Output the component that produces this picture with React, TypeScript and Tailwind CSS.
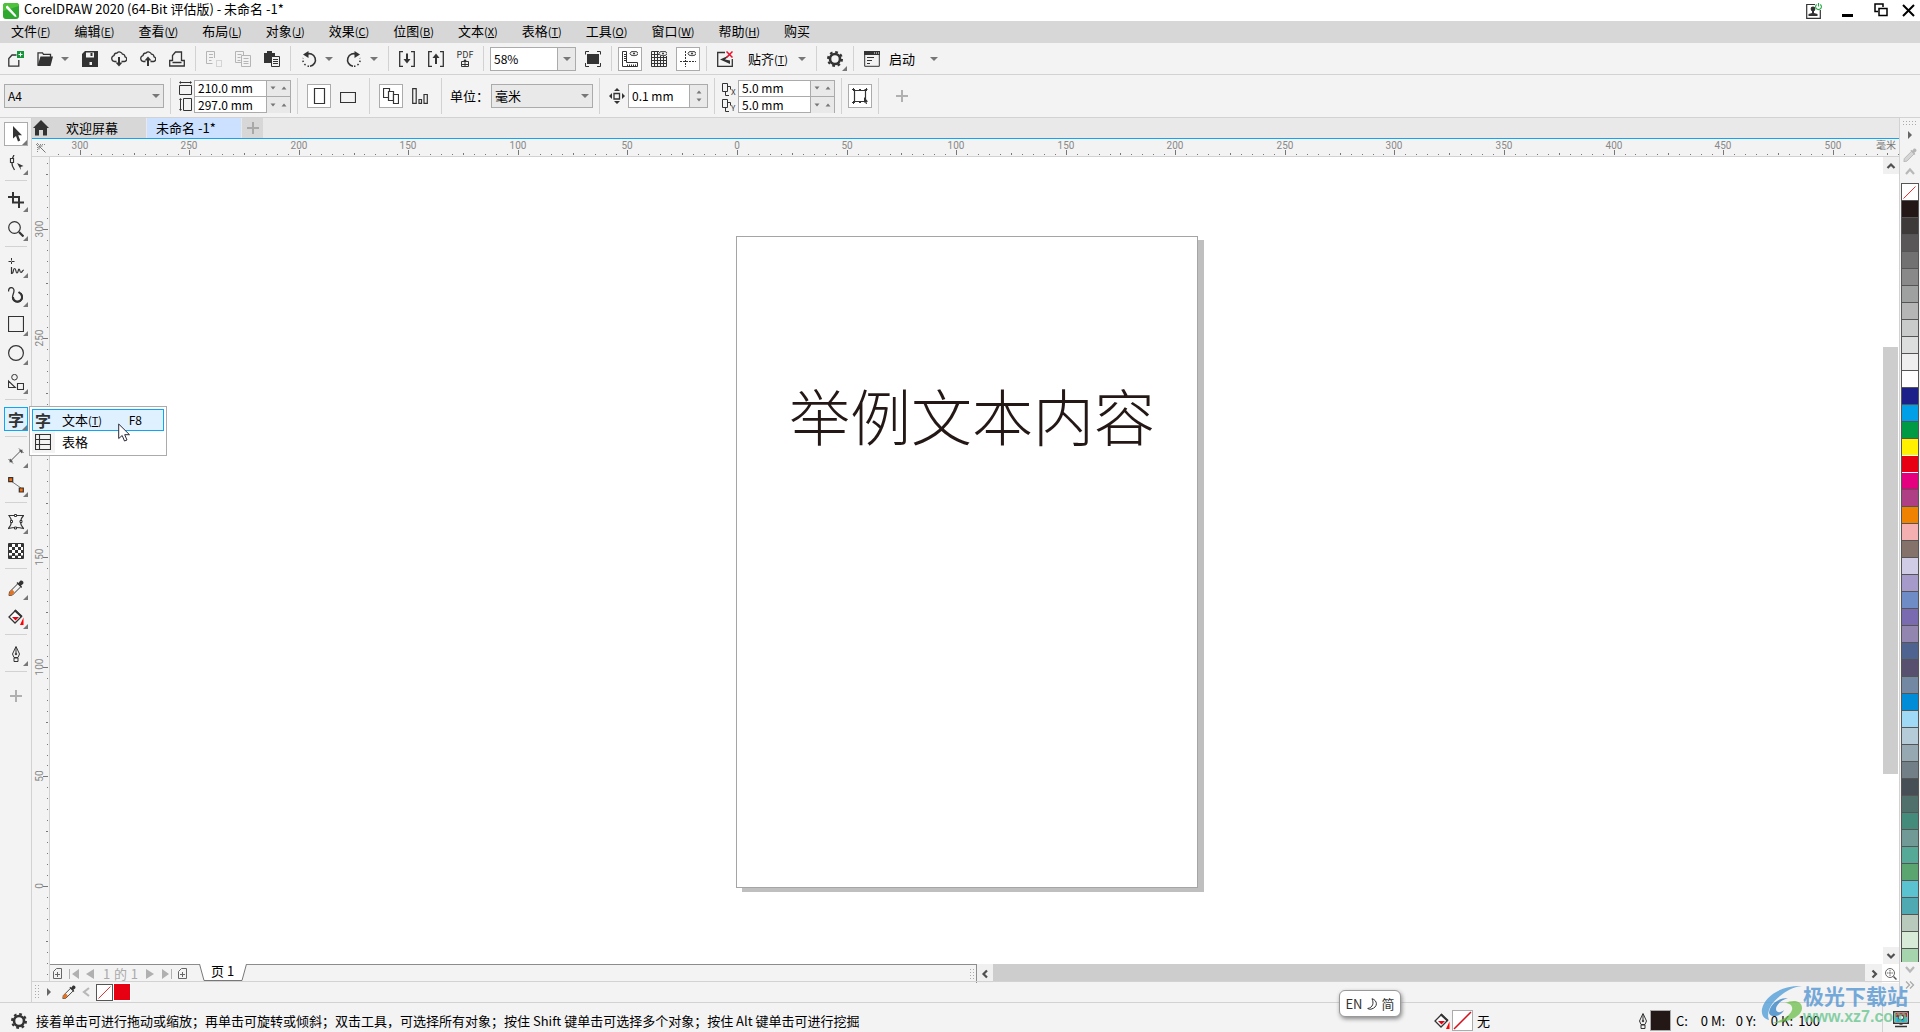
import React from "react";

const PX_PER_MM = 2.1914;
const ORIGIN_X = 687;
const ORIGIN_Y = 729;

const menus = [
  { label: "文件", key: "F" },
  { label: "编辑", key: "E" },
  { label: "查看", key: "V" },
  { label: "布局", key: "L" },
  { label: "对象", key: "J" },
  { label: "效果", key: "C" },
  { label: "位图", key: "B" },
  { label: "文本", key: "X" },
  { label: "表格", key: "T" },
  { label: "工具", key: "O" },
  { label: "窗口", key: "W" },
  { label: "帮助", key: "H" },
  { label: "购买", key: "" },
];

const swatches = [
  "#231815", "#3e3a39", "#595757", "#727171", "#898989", "#9fa0a0", "#b5b5b6", "#c9caca",
  "#dcdddd", "#efefef", "#ffffff", "#1d2088", "#00a0e9", "#009944", "#fff100", "#e60012",
  "#e4007f", "#ae3f85", "#ef8200", "#f4b0b1", "#85736b", "#d0cce5", "#a59aca", "#6f8cc7",
  "#7a6bb1", "#9285b0", "#4e638f", "#58506f", "#7288a3", "#008cd7", "#9fd9f6", "#b5ccd8",
  "#96a9b2", "#727f87", "#464f55", "#50706b", "#458b7b", "#719995", "#56a897", "#5ba570",
  "#5bc2cf", "#4ea9b3", "#b7cabc", "#d8ebd9", "#a5d4ad",
];

type IconProps = {
  w?: number;
  h?: number;
  className?: string;
  children: React.ReactNode;
};

const Icon = ({ w = 16, h = 16, className = "", children }: IconProps) => (
  <svg
    width={w}
    height={h}
    viewBox={`0 0 ${w} ${h}`}
    fill="none"
    stroke="#333"
    className={`shrink-0 ${className}`}
    aria-hidden="true"
  >
    {children}
  </svg>
);

const Caret = ({ up = false, small = false }: { up?: boolean; small?: boolean }) => (
  <Icon w={8} h={4}>
    {small ? (
      <path d={up ? "M1.5 3.5 4 .5l2.5 3z" : "M1.5.5h5L4 3.5z"} fill="#777" stroke="none" />
    ) : (
      <path d={up ? "M0 4 4 0l4 4z" : "M0 0h8L4 4z"} fill="#777" stroke="none" />
    )}
  </Icon>
);

const Corner = () => (
  <svg width="5" height="5" viewBox="0 0 5 5" className="absolute right-0 bottom-0" aria-hidden="true">
    <path d="M5 0v5H0z" fill="#777" />
  </svg>
);

const Sep = () => (
  <div className="flex w-[3px] shrink-0 justify-center self-stretch py-[3px]">
    <div className="w-px bg-[#d2d2d2]" />
  </div>
);

type ToolButtonProps = {
  label: string;
  active?: boolean;
  corner?: boolean;
  children: React.ReactNode;
};

const ToolButton = ({ label, active, corner, children }: ToolButtonProps) => (
  <button
    aria-label={label}
    className={`relative flex size-6 shrink-0 items-center justify-center ${
      active ? "border border-[#ababab] bg-white" : ""
    }`}
  >
    {children}
    {corner && <Corner />}
  </button>
);

const DropButton = ({ label }: { label: string }) => (
  <button aria-label={label} className="flex h-6 w-4 shrink-0 items-center justify-center">
    <Caret />
  </button>
);

const Eye = () => (
  <g>
    <ellipse cx="12" cy="2.5" rx="4" ry="2.2" fill="#f3f3f3" strokeWidth="0.9" />
    <circle cx="12" cy="2.5" r="1" fill="#333" stroke="none" />
  </g>
);

const Gear = () => (
  <Icon>
    <circle cx="8" cy="8" r="5" strokeWidth="2.6" />
    <circle cx="8" cy="8" r="7" strokeWidth="2" strokeDasharray="2.75 2.75" />
  </Icon>
);

const Dropper = ({ muted = false, w = 14 }: { muted?: boolean; w?: number }) => (
  <svg width={w} height={w} viewBox="0 0 16 16" fill="none" stroke={muted ? "#b5b5b5" : "#333"} aria-hidden="true">
    <path d="m10 3.5 3 3-8.500 8.500-3.500.5.5-3.500z" fill={muted ? "#d5d5d5" : "#f3f3f3"} />
    {!muted && <path d="m4 9.500 2.500 2.500-2.500 3-3 .5.5-3z" fill="#e8711c" stroke="none" />}
    <path d="m8.500 3 5 5 .5-1-1-1.500 2-1.500c1.500-2-1-4.500-3-3L10.500 3 9.500 2z" fill={muted ? "#b5b5b5" : "#333"} stroke="none" />
  </svg>
);

const Bucket = () => (
  <Icon>
    <path d="m7.500 1.500 6 6-6.500 6.500L1 8z" strokeWidth="1.3" fill="#fff" />
    <path d="m7.500.5 7 6.500-1.500 1.500-7-6.500z" fill="#333" stroke="none" />
    <path d="M4 8h7l-3.500 3.500z" fill="#e60012" stroke="none" />
    <path d="M15.500 8.500V16H12z" fill="#f00" stroke="none" />
  </Icon>
);

const Nib = () => (
  <Icon w={8}>
    <path d="M4 .5 7.500 8 6 11.500H2L.5 8zM2 12h4v3.500H2zM4 1v6" />
    <circle cx="4" cy="8" r="0.8" fill="#333" />
  </Icon>
);

const Chevron = ({ d, muted = false }: { d: string; muted?: boolean }) => (
  <Icon w={10} h={10}>
    <path d={d} stroke={muted ? "#b8b8b8" : "#505050"} strokeWidth="2.2" />
  </Icon>
);

const TitleBar = () => (
  <header className="flex h-[21px] shrink-0 items-center bg-white pr-[5px] pl-[3px]">
    <svg width="16" height="16" viewBox="0 0 16 16" aria-hidden="true">
      <rect width="16" height="16" rx="3" fill="#2fa82f" />
      <path d="M3 0h10a3 3 0 0 1 3 3L0 8V3a3 3 0 0 1 3-3z" fill="#4dc23a" />
      <path d="m3 3.500 1.500-1 8.500 9.500.5 2-2-.5L3 5z" fill="#fff" />
    </svg>
    <h1 className="ml-[5px] self-start text-[13px] leading-[18px]">CorelDRAW 2020 (64-Bit 评估版) - 未命名 -1*</h1>
    <div className="ml-auto flex items-center gap-5">
      <button aria-label="帐户">
        <Icon>
          <path d="M9 1.500H.7v13.800h13.600V7" strokeWidth="1.2" />
          <circle cx="7" cy="6" r="2.4" fill="#333" stroke="none" />
          <path d="M6 8h2v2l3.500 1v2h-9v-2L6 10z" fill="#333" stroke="none" />
          <path d="M10.700 1.500a2.900 2.900 0 1 0 3.600 0M12.500 0v3.500" stroke="#22a845" strokeWidth="1.1" />
        </Icon>
      </button>
      <button aria-label="最小化">
        <Icon w={12}>
          <path d="M0 12.500h11" stroke="#000" strokeWidth="3" />
        </Icon>
      </button>
      <button aria-label="还原">
        <Icon w={14}>
          <path d="M4 8.500H1V1h8v3M5 5.500h8v7H5z" stroke="#000" strokeWidth="1.5" />
        </Icon>
      </button>
      <button aria-label="关闭" className="-ml-[6px]">
        <Icon w={13}>
          <path d="m1 2 11 11M12 2 1 13" stroke="#000" strokeWidth="2" />
        </Icon>
      </button>
    </div>
  </header>
);

const MenuBar = () => (
  <nav className="flex h-[22px] shrink-0 items-start gap-6 bg-[#d7d7d7] pl-[11px] text-[13px]">
    {menus.map((menu) => (
      <button key={menu.label} className="flex items-center leading-5">
        {menu.label}
        {menu.key && (
          <span className="text-[11px]">
            (<u className="underline-offset-1">{menu.key}</u>)
          </span>
        )}
      </button>
    ))}
  </nav>
);

const Cloud = ({ down }: { down: boolean }) => (
  <Icon>
    <path
      d="M5.500 10.500h-2a3 3 0 0 1-.5-5.900 3 3 0 0 1 3-2.600 3.300 3.300 0 0 1 5.500 1.200 2.800 2.800 0 0 1 2.500 2.600 2.400 2.400 0 0 1-.5 4.700h-3"
      strokeWidth="1.3"
    />
    <path d={down ? "M8 6v6" : "M8 9v6"} strokeWidth="2" />
    <path d={down ? "M4.500 11.500h7L8 15.500z" : "M4.500 9.500h7L8 5.500z"} fill="#333" stroke="none" />
  </Icon>
);

const StandardBar = () => (
  <div className="flex h-8 shrink-0 items-center gap-[5px] border-b border-[#d2d2d2] pl-1">
    <ToolButton label="新建">
      <Icon>
        <path d="M8.500 4H4L.8 7.500v7.700h10V9" strokeWidth="1.3" />
        <path d="M9 0h7v7H9z" fill="#13963a" stroke="none" />
        <path d="M12.500 1.500v4M10.500 3.500h4" stroke="#fff" />
      </Icon>
    </ToolButton>
    <div className="flex">
      <ToolButton label="打开">
        <Icon>
          <path d="M1 14.500V1.800h4.500l1 1.500h7V6" strokeWidth="1.3" />
          <path d="M3.500 5.500H16L13.500 15H.5z" fill="#333" stroke="none" />
        </Icon>
      </ToolButton>
      <DropButton label="最近打开的文件" />
    </div>
    <ToolButton label="保存">
      <Icon>
        <path d="M3 0h13v16H0V3z" fill="#333" stroke="none" />
        <path d="M4 1.500h8v5H4z" fill="#f3f3f3" stroke="none" />
        <path d="M9.500 2v3" strokeWidth="2" />
        <path d="M7.500 11h2.500v3H7.500z" fill="#f3f3f3" stroke="none" />
      </Icon>
    </ToolButton>
    <ToolButton label="从云端打开">
      <Cloud down />
    </ToolButton>
    <ToolButton label="保存到云端">
      <Cloud down={false} />
    </ToolButton>
    <ToolButton label="打印">
      <Icon>
        <path d="M3.500 10V4.500l3-3.500h6v9" strokeWidth="1.3" />
        <path d="M3.500 9.500H.7V15h14.600V9.500h-2.800M3.500 11.500h9" strokeWidth="1.3" />
      </Icon>
    </ToolButton>
    <Sep />
    <ToolButton label="剪切">
      <Icon>
        <path d="M6.500 12.500h-6v-12h8V7M3 3.500h4M3 6.500h4M3 9.500h2.500" stroke="#b5b5b5" />
        <path d="M10.500 9.500h5v6h-5z" stroke="#b5b5b5" strokeDasharray="1 1" />
      </Icon>
    </ToolButton>
    <ToolButton label="复制">
      <Icon>
        <path d="M6 11.500H.5V.5h8V4M2.500 3.500h4M2.500 6.500h3M2.500 9.500h3M6.500 4.500h9v11h-9zM8.500 7.500h5M8.500 10.500h5M8.500 12.500h5" stroke="#b5b5b5" />
      </Icon>
    </ToolButton>
    <ToolButton label="粘贴">
      <Icon>
        <path d="M0 2h3V0h5v2h3v10H0z" fill="#333" stroke="none" />
        <path d="M7.500 5.500h8v10h-8z" fill="#f3f3f3" />
        <path d="M9 8.500h5M9 10.500h5M9 12.500h5" />
      </Icon>
    </ToolButton>
    <Sep />
    <div className="flex">
      <ToolButton label="撤销">
        <Icon>
          <path d="M5 3.500a6.300 6.300 0 1 1 4 11.700" strokeWidth="1.6" />
          <path d="M8 15.200A6.300 6.300 0 0 1 2.200 7" strokeWidth="1.6" strokeDasharray="1.5 2.2" />
          <path d="M7.500 0v7L2 3.500z" fill="#333" stroke="none" />
        </Icon>
      </ToolButton>
      <DropButton label="撤销列表" />
    </div>
    <div className="flex">
      <ToolButton label="重做">
        <Icon>
          <path d="M11 3.500a6.300 6.300 0 1 0-4 11.700" strokeWidth="1.6" />
          <path d="M8 15.200A6.300 6.300 0 0 0 13.800 7" strokeWidth="1.6" strokeDasharray="1.5 2.2" />
          <path d="M8.500 0v7L14 3.500z" fill="#333" stroke="none" />
        </Icon>
      </ToolButton>
      <DropButton label="重做列表" />
    </div>
    <Sep />
    <ToolButton label="导入">
      <Icon>
        <path d="M4 .7H.7v14.600H4M12 .7h3.300v14.600H12" strokeWidth="1.3" />
        <path d="M8 2.500V9" strokeWidth="2" />
        <path d="M4.500 8h7L8 12.500z" fill="#333" stroke="none" />
      </Icon>
    </ToolButton>
    <ToolButton label="导出">
      <Icon>
        <path d="M4 .7H.7v14.600H4M12 .7h3.300v14.600H12" strokeWidth="1.3" />
        <path d="M8 6v7" strokeWidth="2" />
        <path d="M4.500 7h7L8 2.500z" fill="#333" stroke="none" />
      </Icon>
    </ToolButton>
    <button aria-label="发布为 PDF" className="flex size-6 shrink-0 flex-col items-center justify-center text-[9px] leading-2 text-[#333]">
      PDF
      <Icon w={8} h={8}>
        <path d="M2.500 2.500h-2v5h7v-5h-2M.5 5.500h7M4 1v6" />
        <path d="M1.500 3h5L4 0z" fill="#333" stroke="none" />
      </Icon>
    </button>
    <Sep />
    <div className="flex h-6 w-[86px] border border-[#ababab] bg-white">
      <input aria-label="缩放级别" defaultValue="58%" className="w-full min-w-0 flex-1 pl-[3px] text-xs outline-none" />
      <button aria-label="缩放列表" className="flex w-[18px] items-center justify-center border-l border-[#ababab] bg-[#e9e9e9]">
        <Caret />
      </button>
    </div>
    <ToolButton label="全屏预览">
      <Icon>
        <path d="M.5 3.500V.5H4M12 .5h3.500v3M.5 12v3.500H4M12 15.500h3.500V12" />
        <path d="M2 3h12v10H2z" fill="#333" stroke="none" />
      </Icon>
    </ToolButton>
    <Sep />
    <ToolButton label="显示标尺" active>
      <Icon>
        <path d="M.5.5h4v11h11v4H.5zM2 3.500h2M2 5.500h2M2 7.500h2M2 9.500h2M5.500 13.500v2M7.500 13.500v2M9.500 13.500v2M11.500 13.500v2M13.500 13.500v2" />
        <Eye />
      </Icon>
    </ToolButton>
    <ToolButton label="显示网格">
      <Icon>
        <path d="M.5.5h15v15H.5zM3.500 0v16M6.500 0v16M9.500 0v16M12.500 0v16M0 3.500h16M0 6.500h16M0 9.500h16M0 12.500h16" />
        <path d="M8 0h8v5H8z" fill="#f3f3f3" stroke="none" />
        <Eye />
      </Icon>
    </ToolButton>
    <ToolButton label="显示辅助线" active>
      <Icon>
        <path d="M5.500 0v16M0 10.500h16" strokeDasharray="2 1" />
        <Eye />
      </Icon>
    </ToolButton>
    <Sep />
    <ToolButton label="贴齐关闭">
      <Icon>
        <path d="M8 1.500H.7v14h14.600V8" strokeWidth="1.3" />
        <path d="M13 4 3 8.500l10 4.500V9.500L8 8.500z" fill="#333" stroke="none" />
        <path d="m9.500.5 6 6M15.500.5l-6 6" stroke="#e8112d" strokeWidth="1.5" />
      </Icon>
    </ToolButton>
    <button className="flex w-[68px] shrink-0 items-center pl-[6px] text-[13px] leading-5">
      贴齐
      <span className="text-[11px]">
        (<u className="underline-offset-1">T</u>)
      </span>
      <span className="ml-auto flex w-4 justify-center">
        <Caret />
      </span>
    </button>
    <Sep />
    <ToolButton label="选项" corner>
      <Gear />
    </ToolButton>
    <Sep />
    <ToolButton label="应用程序启动器">
      <Icon>
        <path d="M.7.7h14.600v14.600H.7zM3 6.500h7M3 9.500h5M3 12.500h3" />
        <path d="M0 0h16v4H0z" fill="#333" stroke="none" />
        <path d="M10 2h1M12 2h1M14 2h1" stroke="#fff" />
      </Icon>
    </ToolButton>
    <button className="flex w-[53px] shrink-0 items-center justify-between text-[13px] leading-5">
      启动
      <span className="flex w-4 justify-center">
        <Caret />
      </span>
    </button>
  </div>
);

type PairProps = { first: string; second: string; labels: [string, string] };

const NumberPair = ({ first, second, labels }: PairProps) => (
  <div className="h-[33px] w-[97px] divide-y divide-[#ababab] border border-[#ababab] bg-white">
    {[first, second].map((value, i) => (
      <div key={labels[i]} className="flex h-4 overflow-hidden">
        <input aria-label={labels[i]} defaultValue={value} className="min-w-0 flex-1 pl-[3px] text-xs leading-4 outline-none" />
        <div className="flex w-6 items-center justify-evenly border-l border-[#ababab] bg-[#e9e9e9]">
          <button aria-label={`${labels[i]}减少`}>
            <Caret small />
          </button>
          <button aria-label={`${labels[i]}增加`}>
            <Caret small up />
          </button>
        </div>
      </div>
    ))}
  </div>
);

const Duplicate = ({ axis }: { axis: string }) => (
  <div className="flex h-4 w-[14px] items-end">
    <Icon w={9} h={13}>
      <path d="M.5.5h5v8h-5zM8.500 3.500v3M6 3.500h2.500M3.500 9v3.500H7" />
    </Icon>
    <span className="text-[8px] leading-2 text-[#333]">{axis}</span>
  </div>
);

const PropertyBar = () => (
  <div className="flex h-[43px] shrink-0 items-center gap-[5px] border-b border-[#d2d2d2] pl-1">
    <div className="relative">
      <select aria-label="页面大小" className="block h-6 w-40 appearance-none border border-[#ababab] bg-[#e9e9e9] pl-[3px] text-xs outline-none">
        <option>A4</option>
      </select>
      <span className="pointer-events-none absolute top-[10px] right-1">
        <Caret />
      </span>
    </div>
    <Sep />
    <div className="flex items-center gap-[2px] pl-[2px]">
      <div className="flex flex-col gap-[3px]">
        <Icon w={13} h={14}>
          <path d="M.5 4.500h12v9H.5zM1 1.500h11" />
          <path d="M0 1.500 2 0v3zM13 1.500 11 0v3z" fill="#333" stroke="none" />
        </Icon>
        <Icon w={13} h={13}>
          <path d="M4.500.5h8v12h-8zM1.500 1v11" />
          <path d="M1.500 0 3 2H0zM1.500 13 3 11H0z" fill="#333" stroke="none" />
        </Icon>
      </div>
      <NumberPair first="210.0 mm" second="297.0 mm" labels={["页面宽度", "页面高度"]} />
    </div>
    <Sep />
    <div className="flex gap-[5px] px-[3px]">
      <ToolButton label="纵向" active>
        <Icon>
          <path d="M3.500.5h10v15h-10z" strokeWidth="1.2" />
        </Icon>
      </ToolButton>
      <ToolButton label="横向">
        <Icon>
          <path d="M.5 4.500h15v10H.5z" strokeWidth="1.2" />
        </Icon>
      </ToolButton>
    </div>
    <Sep />
    <div className="flex gap-[5px] px-[3px]">
      <ToolButton label="所有页面" active>
        <Icon>
          <path d="M.5.5h6v9h-6z" strokeWidth="1.2" />
          <path d="M5.500 3.500h5v9h-5z" fill="#fff" strokeWidth="1.2" />
          <path d="M10.500 6.500h5v9h-5z" fill="#fff" strokeWidth="1.2" />
        </Icon>
      </ToolButton>
      <ToolButton label="当前页面">
        <Icon>
          <path d="M.7.7h3.500v14.600H.7zM7 11.500h2.500v3.800H7zM12 6.500h3.300v8.800H12z" strokeWidth="1.2" />
        </Icon>
      </ToolButton>
    </div>
    <Sep />
    <div className="flex items-center pl-[2px] text-[13px]">
      <label htmlFor="unit" className="w-[41px] leading-5">
        单位：
      </label>
      <div className="relative">
        <select id="unit" defaultValue="毫米" className="block h-6 w-[102px] appearance-none border border-[#ababab] bg-[#e9e9e9] pl-[3px] outline-none">
          <option>毫米</option>
        </select>
        <span className="pointer-events-none absolute top-[10px] right-1">
          <Caret />
        </span>
      </div>
    </div>
    <Sep />
    <div className="flex items-center gap-[3px] pl-[3px]">
      <Icon>
        <path d="M5 5.500h5.500V11H5z" strokeWidth="1.3" />
        <path d="m8 0 3 3H5zM8 16l-3-3h6zM0 8l3-3v6zM16 8l-3 3V5z" fill="#333" stroke="none" />
      </Icon>
      <div className="flex h-6 w-20 border border-[#ababab] bg-white">
        <input aria-label="微调距离" defaultValue="0.1 mm" className="min-w-0 flex-1 pl-[3px] text-xs outline-none" />
        <div className="flex w-[18px] flex-col items-center justify-evenly border-l border-[#ababab] bg-[#e9e9e9]">
          <button aria-label="微调增加">
            <Caret small up />
          </button>
          <button aria-label="微调减少">
            <Caret small />
          </button>
        </div>
      </div>
    </div>
    <Sep />
    <div className="flex items-center gap-[2px] pl-px">
      <div className="flex flex-col">
        <Duplicate axis="X" />
        <Duplicate axis="Y" />
      </div>
      <NumberPair first="5.0 mm" second="5.0 mm" labels={["再制水平距离", "再制垂直距离"]} />
    </div>
    <Sep />
    <ToolButton label="将所有对象视为已填充" active>
      <Icon>
        <path d="M2.500 2.500h11v11h-11z" strokeWidth="1.2" />
        <path d="M0 1.500h3M1.500 0v3M12.500 1.500h3M14.500 0v3M0 14.500h3M1.500 13v3M7 1.500h2M7 14.500h2" />
        <path d="m12 9 4 4.500-1.500.5.5 2h-1l-1-2-1 1z" fill="#333" stroke="none" />
      </Icon>
    </ToolButton>
    <Sep />
    <button aria-label="自定义" className="flex h-6 w-8 items-center justify-center pl-[2px]">
      <Icon w={12} h={12}>
        <path d="M6 0v12M0 6h12" stroke="#b0b0b0" strokeWidth="2" />
      </Icon>
    </button>
  </div>
);

const ToolSlot = ({ label, active, corner = true, children }: ToolButtonProps) => (
  <div className="flex h-[29px] shrink-0 items-center pl-1">
    <ToolButton label={label} active={active} corner={corner}>
      {children}
    </ToolButton>
  </div>
);

const ToolSep = () => <div className="mt-[3px] mb-1 ml-[5px] h-px w-[22px] shrink-0 bg-[#d2d2d2]" />;

const TextGlyph = () => <span className="text-base leading-4 font-bold text-[#333]">字</span>;

const TextFlyout = () => (
  <div role="menu" className="absolute top-[2px] left-[29px] z-20 h-[50px] w-[138px] border border-[#ababab] bg-white p-[2px]">
    <button role="menuitem" className="flex h-[22px] w-[132px] items-center border border-[#0ea5f5] bg-[#dff0ff] pl-[2px] text-[13px]">
      <TextGlyph />
      <span className="ml-[11px] flex items-center leading-5">
        文本
        <span className="text-[11px]">
          (<u className="underline-offset-1">T</u>)
        </span>
      </span>
      <span className="ml-auto pr-[21px] text-xs">F8</span>
    </button>
    <button role="menuitem" className="flex h-[22px] w-[132px] items-center text-[13px] leading-5">
      <span className="flex h-[22px] w-[23px] items-center bg-[#f3f3f3] pl-[3px]">
        <Icon>
          <path d="M.5.5h15v15H.5zM4.500 0v16M0 5.500h16M0 10.500h16" strokeWidth="1.1" />
        </Icon>
      </span>
      <span className="ml-[7px]">表格</span>
    </button>
    <svg width="13" height="20" viewBox="0 0 13 20" className="absolute top-4 left-[88px]" aria-hidden="true">
      <path d="M.7 1v14.500l3.500-3 2.300 5.500 2.500-1-2.300-5.300h4.800z" fill="#fff" stroke="#2a2a3a" />
    </svg>
  </div>
);

const Toolbox = () => (
  <aside className="flex w-8 shrink-0 flex-col border-r border-[#d2d2d2] pt-px">
    <ToolSlot label="选择" active>
      <Icon>
        <path d="M5 0v12.500l3-2.500 2 5.500 2.200-1-2-5.200H14z" fill="#333" stroke="none" />
      </Icon>
    </ToolSlot>
    <ToolSlot label="形状">
      <Icon>
        <path d="M6 0C3 5 3 10 6.500 15" strokeWidth="1.3" />
        <path d="M2.500 3.500h3v4h-3z" fill="#fff" strokeWidth="1.2" />
        <path d="m9 8 6.500 3-3 1 .5 3z" fill="#333" stroke="none" />
      </Icon>
    </ToolSlot>
    <ToolSep />
    <ToolSlot label="裁剪">
      <Icon>
        <path d="M5 0v10.500h11M0 5h11v11" strokeWidth="2" />
      </Icon>
    </ToolSlot>
    <ToolSlot label="缩放">
      <Icon>
        <circle cx="6.500" cy="6.500" r="5.8" strokeWidth="1.2" />
        <path d="m11 11 4.500 4.500" strokeWidth="2.2" />
      </Icon>
    </ToolSlot>
    <ToolSep />
    <ToolSlot label="手绘">
      <Icon>
        <path d="M3.500 0v6M.5 3.500h6" strokeDasharray="2.5 1 2.5" />
        <path d="M3.500 9v6.500c3 0 1-5 3-5s1 4.500 2.500 4.500 1-4 2-4 .5 3.500 2 3.500 1-2.500 3-2.500" strokeWidth="1.2" />
      </Icon>
    </ToolSlot>
    <ToolSlot label="艺术笔">
      <Icon>
        <path d="M.5 4.500C.5-1 6 0 6 3.500c0 3-1.500 4-1.500 7a4.700 4.700 0 0 0 5 4.500c4 0 6.500-4.500 3.500-8.500" strokeWidth="1.3" />
        <path d="M5 10a4.300 4.300 0 0 0 4.500 4.500c3.500 0 6-3.500 3.500-7.500L10.500 5" strokeWidth="2" />
      </Icon>
    </ToolSlot>
    <ToolSlot label="矩形">
      <Icon>
        <path d="M.5.5h15v15H.5z" strokeWidth="1.2" />
      </Icon>
    </ToolSlot>
    <ToolSlot label="椭圆形">
      <Icon>
        <circle cx="8" cy="8" r="7.4" strokeWidth="1.2" />
      </Icon>
    </ToolSlot>
    <ToolSlot label="常见形状">
      <Icon>
        <circle cx="6.500" cy="3.2" r="2.8" />
        <path d="M.5 7v6.500h6.800zM9.500 9.500h6v6h-6z" strokeWidth="1.1" />
      </Icon>
    </ToolSlot>
    <ToolSep />
    <div className="relative flex h-[29px] shrink-0 items-center pl-1">
      <button aria-label="文本" className="relative flex size-6 items-center justify-center border border-[#0ea5f5] bg-[#dff0ff]">
        <TextGlyph />
        <Corner />
      </button>
      <TextFlyout />
    </div>
    <ToolSep />
    <ToolSlot label="平行度量">
      <Icon>
        <path d="M2.500 13 13 2.500M.5 11l4.500 4.500M11 .5 15.500 5" stroke="#555" />
        <path d="m1.500 14.500.5-4 3 3zM14.500 1.500l-.5 4-3-3z" fill="#555" stroke="none" />
      </Icon>
    </ToolSlot>
    <ToolSlot label="连接器">
      <Icon>
        <path d="m3 4 10 7" stroke="#777" />
        <path d="M.7.7h4v4h-4zM11.300 11h4v4h-4z" fill="#ff6a00" strokeWidth="1.2" />
      </Icon>
    </ToolSlot>
    <ToolSep />
    <ToolSlot label="封套">
      <Icon>
        <path d="M1 1.500h14.500Q9.500 8 15.500 14.500q-7.500-2-15 0Q6 8 1 1.500z" strokeWidth="1.2" />
        <path d="M6.500.5h2v2h-2zM6.500 13h2v2h-2zM2.500 6.500h2v2h-2zM12 6.500h2v2h-2z" fill="#fff" />
      </Icon>
    </ToolSlot>
    <ToolSlot label="透明度" corner={false}>
      <Icon>
        <path d="M.5.5h15v15H.5z" fill="#fff" />
        <path d="M1 2.500h14M1 8.500h14M1 14h14" strokeWidth="3" strokeDasharray="3 3" />
        <path d="M4 5.500h12M4 11.500h12" strokeWidth="3" strokeDasharray="3 3" />
      </Icon>
    </ToolSlot>
    <ToolSep />
    <ToolSlot label="颜色滴管">
      <Dropper w={16} />
    </ToolSlot>
    <ToolSlot label="交互式填充">
      <Bucket />
    </ToolSlot>
    <ToolSep />
    <ToolSlot label="轮廓笔">
      <Nib />
    </ToolSlot>
    <ToolSep />
    <button aria-label="自定义工具箱" className="mt-[5px] flex h-[29px] items-center justify-center">
      <Icon w={12} h={12}>
        <path d="M6 0v12M0 6h12" stroke="#b0b0b0" strokeWidth="2" />
      </Icon>
    </button>
  </aside>
);

const DocumentTabs = () => (
  <div className="flex h-[21px] shrink-0 gap-px border-b border-[#0ea5f5] bg-[#e9e9e9] text-[13px] leading-5">
    <div className="flex w-[114px] items-center bg-[#d7d7d7] pl-px">
      <button aria-label="主页">
        <Icon>
          <path d="m8 0 8 8h-2v7.500h-4V10H6v5.500H2V8H0z" fill="#333" stroke="none" />
        </Icon>
      </button>
      <button className="ml-[17px]">欢迎屏幕</button>
    </div>
    <button className="w-[94px] bg-[#cce0ff] pl-[9px] text-left">未命名 -1*</button>
    <button aria-label="新建文档" className="flex w-[21px] items-center justify-center bg-[#d7d7d7]">
      <Icon w={12} h={12}>
        <path d="M6 0v12M0 6h12" stroke="#a8a8a8" strokeWidth="2" />
      </Icon>
    </button>
  </div>
);

const range = (from: number, to: number) =>
  Array.from({ length: (to - from) / 5 + 1 }, (_, i) => from + i * 5);

const tickLength = (mm: number) => (mm % 50 === 0 ? 5 : mm % 25 === 0 ? 2 : 1);

const HorizontalRuler = () => (
  <div className="flex h-[18px] shrink-0 border-b border-[#d2d2d2]">
    <div className="flex w-[18px] shrink-0 items-center justify-center">
      <Icon w={10} h={10}>
        <path d="M0 1.500h10M1.500 0v10" stroke="#888" strokeDasharray="1 1" />
        <path d="m3 3 6.500 6.500M3 6.500V3h3.500" stroke="#777" />
      </Icon>
    </div>
    <div className="relative min-w-0 flex-1">
      <svg className="block h-[17px] w-full font-[Roboto]" aria-hidden="true">
        {range(-310, 535).map((mm) => {
          const x = Math.round(ORIGIN_X + mm * PX_PER_MM);
          return (
            <g key={mm}>
              <rect x={x} y={16 - tickLength(mm)} width="1" height={tickLength(mm)} fill="#777" />
              {mm % 50 === 0 && (
                <text x={x} y="10" textAnchor="middle" className="fill-[#888] text-[10px]">
                  {Math.abs(mm)}
                </text>
              )}
            </g>
          );
        })}
      </svg>
      <span className="absolute top-0 right-[3px] text-[10px] leading-3 text-[#777]">毫米</span>
    </div>
  </div>
);

const VerticalRuler = () => (
  <div className="w-[18px] shrink-0 overflow-hidden border-r border-[#d2d2d2]">
    <svg className="block h-full w-[17px] font-[Roboto]" aria-hidden="true">
      {range(-40, 330).map((mm) => {
        const y = Math.round(ORIGIN_Y - mm * PX_PER_MM);
        return (
          <g key={mm}>
            <rect x={16 - tickLength(mm)} y={y} width={tickLength(mm)} height="1" fill="#777" />
            {mm % 50 === 0 && (
              <text transform={`translate(11 ${y}) rotate(-90)`} textAnchor="middle" className="fill-[#888] text-[10px]">
                {Math.abs(mm)}
              </text>
            )}
          </g>
        );
      })}
    </svg>
  </div>
);

const Canvas = () => (
  <div className="flex min-h-0 flex-1 bg-white">
    <div className="relative min-w-0 flex-1 overflow-hidden">
      <div className="absolute top-[79px] left-[686px] h-[652px] w-[462px] border border-[#a5a5a5] bg-white pt-[142px] shadow-[6px_4px_0_#bfbfbf]">
        <p className="pl-[52px] text-[61px] leading-[72px] font-light whitespace-nowrap text-[#231815]">举例文本内容</p>
      </div>
    </div>
    <div className="flex w-4 shrink-0 flex-col">
      <button aria-label="向上滚动" className="flex h-[17px] items-center justify-center bg-[#f0f0f0]">
        <Chevron d="M1.500 7 5 3.500 8.500 7" />
      </button>
      <div className="flex-[173]" />
      <div className="mr-px flex-[427] bg-[#cdcdcd]" />
      <div className="flex-[173]" />
      <button aria-label="向下滚动" className="flex h-[17px] items-center justify-center bg-[#f0f0f0]">
        <Chevron d="M1.500 3 5 6.500 8.500 3" />
      </button>
    </div>
  </div>
);

const AddPage = () => (
  <Icon w={9} h={11}>
    <path d="M3.500.5h5v10h-8V3.500zM4.500 4v5M2 6.500h5" stroke="#666" />
  </Icon>
);

const Arrow = ({ d }: { d: string }) => (
  <Icon w={10} h={10}>
    <path d={d} fill="#b0b0b0" stroke="none" />
  </Icon>
);

const PageNavigator = () => (
  <div className="grid h-[17px] shrink-0 grid-cols-[927fr_922fr]">
    <div className="flex items-center border-t border-r border-[#8c8c8c] pb-px pl-[3px]">
      <button aria-label="在前面添加页">
        <AddPage />
      </button>
      <div className="ml-[7px] flex items-center gap-[6px] text-[13px] leading-4 text-[#aaa]">
        <button aria-label="第一页">
          <Arrow d="M0 0h1v10H0zM10 0v10L3 5z" />
        </button>
        <button aria-label="上一页">
          <Arrow d="M9 0v10L1 5z" />
        </button>
        <span className="flex w-[39px] justify-between px-[2px]">
          <span>1</span>
          <span>的</span>
          <span>1</span>
        </span>
        <button aria-label="下一页">
          <Arrow d="M0 0v10l8-5z" />
        </button>
        <button aria-label="最后一页">
          <Arrow d="M0 0v10l7-5zM9 0h1v10H9z" />
        </button>
      </div>
      <button aria-label="在后面添加页" className="ml-[6px]">
        <AddPage />
      </button>
      <button className="relative ml-3 h-[17px] w-12 shrink-0 self-start">
        <svg width="48" height="17" viewBox="0 0 48 17" className="absolute -top-px left-0" aria-hidden="true">
          <path d="M0 0h48l-5 16.500H5z" fill="#fff" />
          <path d="M.5 0 5 16.500h38L47.500 0" fill="none" stroke="#777" />
        </svg>
        <span className="absolute -top-0.5 left-3 text-[13px] leading-4 whitespace-nowrap">页 1</span>
      </button>
      <span className="mr-[2px] ml-auto h-3 w-[5px] bg-[radial-gradient(#aaa_1px,transparent_1px)] bg-size-[3px_3px]" />
    </div>
    <div className="flex">
      <button aria-label="向左滚动" className="flex w-4 items-center justify-center bg-[#f0f0f0]">
        <Chevron d="M7 1.500 3.500 5 7 8.500" />
      </button>
      <div className="mb-px flex-1 bg-[#cdcdcd]" />
      <button aria-label="向右滚动" className="flex w-[17px] items-center justify-center bg-[#f0f0f0]">
        <Chevron d="M3.500 1.500 7 5 3.500 8.500" />
      </button>
      <button aria-label="导航器" className="flex w-[17px] items-center justify-center bg-white">
        <Icon w={12} h={12}>
          <circle cx="5" cy="5" r="4.5" stroke="#666" />
          <path d="M5 2v6M2 5h6" stroke="#666" strokeDasharray="1.5 .7" />
          <path d="m8.500 8.500 3 3" stroke="#555" strokeWidth="1.5" />
        </Icon>
      </button>
    </div>
  </div>
);

const NoColor = () => (
  <svg width="15" height="15" viewBox="0 0 15 15" className="block bg-white" aria-hidden="true">
    <path d="m1.500 13.500 12-12" stroke="#f03030" />
  </svg>
);

const DocumentPalette = () => (
  <div className="flex h-[21px] shrink-0 items-center border-t border-[#d2d2d2] pl-[2px]">
    <span className="h-4 w-[6px] bg-[radial-gradient(#aaa_1px,transparent_1px)] bg-size-[3px_3px]" />
    <button aria-label="调色板菜单" className="ml-[7px]">
      <Icon w={5} h={8}>
        <path d="M0 0v8l4-4z" fill="#666" stroke="none" />
      </Icon>
    </button>
    <button aria-label="滴管" className="ml-[10px]">
      <Dropper w={14} />
    </button>
    <button aria-label="向左" className="ml-[5px]">
      <Chevron d="M8 1 3 5l5 4" muted />
    </button>
    <button aria-label="无填充" className="ml-[5px] border border-[#555]">
      <NoColor />
    </button>
    <button aria-label="红" className="size-[18px] border border-white bg-[#e60012]" />
  </div>
);

const ColorPalette = () => (
  <aside className="flex w-[21px] shrink-0 flex-col border-l border-[#d2d2d2]">
    <div className="flex h-[65px] flex-col items-center pt-[2px]">
      <span className="h-[5px] w-4 bg-[radial-gradient(#aaa_1px,transparent_1px)] bg-size-[3px_3px]" />
      <button aria-label="调色板菜单" className="mt-[6px]">
        <Icon w={5} h={8}>
          <path d="M0 0v8l4-4z" fill="#666" stroke="none" />
        </Icon>
      </button>
      <button aria-label="滴管" className="mt-[9px]">
        <Dropper muted w={14} />
      </button>
      <button aria-label="向上" className="mt-[5px]">
        <Chevron d="M1 7l4-4.500L9 7" muted />
      </button>
    </div>
    <div className="ml-px min-h-0 w-[18px] flex-1 overflow-hidden border-x border-t border-[#555]">
      <button aria-label="无填充" className="block h-[17px] w-4 border-b border-[#555] bg-white">
        <NoColor />
      </button>
      {swatches.map((color) => (
        <button
          key={color}
          aria-label={color}
          className={
            color === "#e60012"
              ? "relative -mx-px -mt-px block h-[18px] w-[18px] border border-white"
              : "block h-[17px] w-4 border-b border-[#555]"
          }
          style={{ backgroundColor: color }}
        />
      ))}
    </div>
    <div className="flex h-10 flex-col items-center pt-[2px]">
      <button aria-label="向下">
        <Chevron d="M1 3l4 4.500L9 3" muted />
      </button>
      <button aria-label="展开" className="mt-[7px]">
        <Icon w={10} h={8}>
          <path d="m1 .5 3.500 3.500L1 7.500M5 .5 8.500 4 5 7.500" stroke="#aaa" strokeWidth="1.3" />
        </Icon>
      </button>
    </div>
  </aside>
);

const cmyk = [
  { name: "C:", value: "0" },
  { name: "M:", value: "0" },
  { name: "Y:", value: "0" },
  { name: "K:", value: "100" },
];

const StatusBar = () => (
  <footer className="flex h-[30px] shrink-0 items-center border-t border-[#d2d2d2] pt-[6px] pl-[11px] text-[13px] leading-5">
    <button aria-label="状态栏选项">
      <Gear />
    </button>
    <p className="ml-[9px] whitespace-nowrap">
      接着单击可进行拖动或缩放；再单击可旋转或倾斜；双击工具，可选择所有对象；按住 Shift 键单击可选择多个对象；按住 Alt 键单击可进行挖掘
    </p>
    <div className="ml-auto flex w-[205px] shrink-0 items-center">
      <Bucket />
      <span className="ml-[2px] border border-[#ababab] bg-white">
        <svg width="19" height="19" viewBox="0 0 19 19" className="block" aria-hidden="true">
          <path d="m1 18 17-17" stroke="#d8101c" strokeWidth="1.5" />
        </svg>
      </span>
      <span className="ml-1">无</span>
    </div>
    <div className="flex w-[243px] shrink-0 items-center">
      <Nib />
      <span className="ml-[3px] size-[21px] border border-[#ababab] bg-[#231815]" />
      <div className="ml-[5px] flex">
        {cmyk.map((item) => (
          <span key={item.name} className="flex w-[35px] justify-between pr-[3px] last:w-[42px]">
            <span>{item.name}</span>
            <span>{item.value}</span>
          </span>
        ))}
      </div>
    </div>
    <div className="-mt-[6px] flex w-[38px] shrink-0 items-center self-stretch border-l border-[#d2d2d2] pt-1 pl-[10px]">
      <button aria-label="颜色校样">
        <Icon h={17}>
          <path d="M.7.7h14.600v11.600H.7z" fill="#fff" strokeWidth="1.4" />
          <path d="M2 2h12v4H2z" fill="#e8112d" stroke="none" />
          <path d="M2 6h12v5H2z" fill="#1fb0e0" stroke="none" />
          <circle cx="8" cy="6.500" r="2.5" fill="#fff" />
          <path d="M2 15.500h12M6.500 13h3" strokeWidth="1.5" />
        </Icon>
      </button>
    </div>
  </footer>
);

const ImeBar = () => (
  <div className="absolute right-[519px] bottom-[15px] z-10 flex h-[27px] w-[62px] items-center justify-center gap-1 rounded-md border border-[#999] bg-white text-[13px] text-[#333] shadow-[1px_2px_4px_#888]">
    EN
    <Icon w={11} h={12}>
      <path d="M5 .7c5.500 1.500 6.500 8.500-1 10.500-1 .2-2.500 0-3.300-.7C6 9.500 7 5 5 .7z" />
    </Icon>
    简
  </div>
);

const Watermark = () => (
  <div className="pointer-events-none absolute right-3 bottom-[5px] z-10 flex items-center opacity-75">
    <svg width="42" height="40" viewBox="0 0 42 40" aria-hidden="true">
      <path d="M41 1C22 0 4 10 1 24c-1 6 2 10 7 11-3-8 2-17 11-24 6-5 13-9 22-10z" fill="#4a9ad8" />
      <path d="M8 28c1-9 9-15 19-15-7 2-12 7-12 11 0 4 5 4 8 1-2 6-13 9-15 3z" fill="#2f7fc4" />
      <path d="M24 18c9-4 17-2 17 5 0 8-13 15-30 15 9-2 18-7 20-13 1-4-2-7-7-7z" fill="#6cc04a" />
    </svg>
    <div className="flex flex-col items-start">
      <span className="text-[21px] leading-6 font-bold text-[#4a90cf]">极光下载站</span>
      <span className="font-['Liberation_Sans'] text-base leading-5 font-bold text-[#62c48a]">www.xz7.com</span>
    </div>
  </div>
);

export default function App() {
  return (
    <div className="relative flex h-screen min-h-[780px] flex-col overflow-hidden bg-[#f3f3f3] font-['Noto_Sans_CJK_SC',sans-serif] text-black">
      <TitleBar />
      <MenuBar />
      <StandardBar />
      <PropertyBar />
      <main className="flex min-h-0 flex-1">
        <Toolbox />
        <div className="flex min-w-0 flex-1 flex-col">
          <DocumentTabs />
          <HorizontalRuler />
          <div className="flex min-h-0 flex-1">
            <VerticalRuler />
            <div className="flex min-w-0 flex-1 flex-col">
              <Canvas />
              <PageNavigator />
            </div>
          </div>
          <DocumentPalette />
        </div>
        <ColorPalette />
      </main>
      <StatusBar />
      <ImeBar />
      <Watermark />
    </div>
  );
}
